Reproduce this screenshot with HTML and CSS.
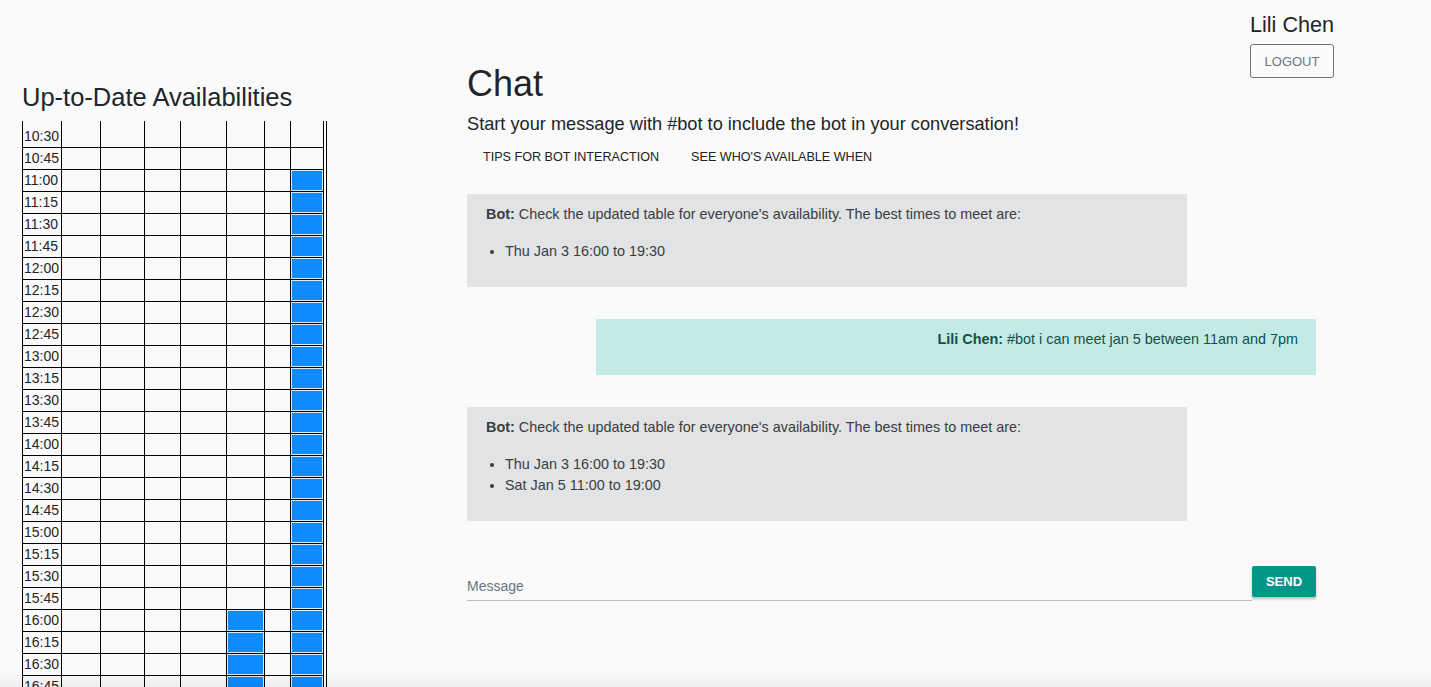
FILE: index.html
```html
<!DOCTYPE html>
<html lang="en">
<head>
<meta charset="utf-8">
<title>Chat</title>
<link rel="stylesheet" href="styles.css">
</head>
<body>
<div class="user-box">
  <div class="user-name">Lili Chen</div>
  <button class="btn-logout" type="button">LOGOUT</button>
</div>

<div class="page">
  <aside class="avail">
    <h2 class="avail-title">Up-to-Date Availabilities</h2>
    <div class="grid-wrap">
      <div class="grid">
        <div class="lbl first">10:30</div><div class="first"></div><div class="first"></div><div class="first"></div><div class="first"></div><div class="first"></div><div class="first"></div><div class="first"></div>
        <div class="lbl">10:45</div><div></div><div></div><div></div><div></div><div></div><div></div><div></div>
        <div class="lbl">11:00</div><div></div><div></div><div></div><div></div><div></div><div></div><div class="on"></div>
        <div class="lbl">11:15</div><div></div><div></div><div></div><div></div><div></div><div></div><div class="on"></div>
        <div class="lbl">11:30</div><div></div><div></div><div></div><div></div><div></div><div></div><div class="on"></div>
        <div class="lbl">11:45</div><div></div><div></div><div></div><div></div><div></div><div></div><div class="on"></div>
        <div class="lbl">12:00</div><div></div><div></div><div></div><div></div><div></div><div></div><div class="on"></div>
        <div class="lbl">12:15</div><div></div><div></div><div></div><div></div><div></div><div></div><div class="on"></div>
        <div class="lbl">12:30</div><div></div><div></div><div></div><div></div><div></div><div></div><div class="on"></div>
        <div class="lbl">12:45</div><div></div><div></div><div></div><div></div><div></div><div></div><div class="on"></div>
        <div class="lbl">13:00</div><div></div><div></div><div></div><div></div><div></div><div></div><div class="on"></div>
        <div class="lbl">13:15</div><div></div><div></div><div></div><div></div><div></div><div></div><div class="on"></div>
        <div class="lbl">13:30</div><div></div><div></div><div></div><div></div><div></div><div></div><div class="on"></div>
        <div class="lbl">13:45</div><div></div><div></div><div></div><div></div><div></div><div></div><div class="on"></div>
        <div class="lbl">14:00</div><div></div><div></div><div></div><div></div><div></div><div></div><div class="on"></div>
        <div class="lbl">14:15</div><div></div><div></div><div></div><div></div><div></div><div></div><div class="on"></div>
        <div class="lbl">14:30</div><div></div><div></div><div></div><div></div><div></div><div></div><div class="on"></div>
        <div class="lbl">14:45</div><div></div><div></div><div></div><div></div><div></div><div></div><div class="on"></div>
        <div class="lbl">15:00</div><div></div><div></div><div></div><div></div><div></div><div></div><div class="on"></div>
        <div class="lbl">15:15</div><div></div><div></div><div></div><div></div><div></div><div></div><div class="on"></div>
        <div class="lbl">15:30</div><div></div><div></div><div></div><div></div><div></div><div></div><div class="on"></div>
        <div class="lbl">15:45</div><div></div><div></div><div></div><div></div><div></div><div></div><div class="on"></div>
        <div class="lbl">16:00</div><div></div><div></div><div></div><div></div><div class="on"></div><div></div><div class="on"></div>
        <div class="lbl">16:15</div><div></div><div></div><div></div><div></div><div class="on"></div><div></div><div class="on"></div>
        <div class="lbl">16:30</div><div></div><div></div><div></div><div></div><div class="on"></div><div></div><div class="on"></div>
        <div class="lbl">16:45</div><div></div><div></div><div></div><div></div><div class="on"></div><div></div><div class="on"></div>
        <div class="lbl">17:00</div><div></div><div></div><div></div><div></div><div class="on"></div><div></div><div class="on"></div>
      </div>
    </div>
  </aside>

  <main class="chat">
    <h1 class="chat-title">Chat</h1>
    <p class="lead">Start your message with #bot to include the bot in your conversation!</p>
    <div class="tabs">
      <button class="tab" type="button">TIPS FOR BOT INTERACTION</button>
      <button class="tab" type="button">SEE WHO'S AVAILABLE WHEN</button>
    </div>

    <div class="messages">
      <div class="msg msg-bot">
        <p class="msg-text"><b>Bot:</b> Check the updated table for everyone's availability. The best times to meet are:</p>
        <ul class="msg-list">
          <li>Thu Jan 3 16:00 to 19:30</li>
        </ul>
      </div>
      <div class="msg msg-user">
        <p class="msg-text"><b>Lili Chen:</b> #bot i can meet jan 5 between 11am and 7pm</p>
      </div>
      <div class="msg msg-bot">
        <p class="msg-text"><b>Bot:</b> Check the updated table for everyone's availability. The best times to meet are:</p>
        <ul class="msg-list">
          <li>Thu Jan 3 16:00 to 19:30</li>
          <li>Sat Jan 5 11:00 to 19:00</li>
        </ul>
      </div>
    </div>

    <form class="composer">
      <input class="composer-input" type="text" placeholder="Message">
      <button class="btn-send" type="button">SEND</button>
    </form>
  </main>
</div>
<div class="bottom-shade"></div>
</body>
</html>
```

FILE: styles.css
```css
* { box-sizing: border-box; }

html, body {
  margin: 0;
  padding: 0;
  height: 100%;
  overflow: hidden;
}

body {
  background: #fafafa;
  font-family: "Liberation Sans", Arial, sans-serif;
  color: #212529;
}

/* user box top right */
.user-box {
  position: absolute;
  top: 12px;
  right: 97px;
  width: 84px;
  display: flex;
  flex-direction: column;
  align-items: flex-start;
}

.user-name {
  font-size: 21.6px;
  line-height: 26px;
  color: #212529;
  white-space: nowrap;
}

.btn-logout {
  margin-top: 6px;
  width: 84px;
  height: 34px;
  padding: 0;
  background: transparent;
  border: 1px solid #6c757d;
  border-radius: 3px;
  color: #6c757d;
  font-family: "Liberation Sans", Arial, sans-serif;
  font-size: 13px;
}

/* page layout */
.page {
  display: flex;
  padding-left: 22px;
}

.avail {
  width: 445px;
  flex: none;
  padding-top: 82px;
}

.avail-title {
  margin: 0 0 9px;
  font-size: 25.5px;
  line-height: 30px;
  font-weight: normal;
  color: #212529;
  white-space: nowrap;
}

.grid-wrap {
  width: 305px;
  height: 566px;
  overflow: hidden;
  border-right: 1px solid #000;
}

.grid {
  display: grid;
  grid-template-columns: 38px 38px 43px 35px 45px 37px 25px 32px;
  grid-template-rows: 26px;
  grid-auto-rows: 21px;
  gap: 1px;
  padding: 0 1px 1px;
  background: #000;
  width: 302px;
}

.grid > div {
  background: #fafafa;
}

.grid > .first {
  padding-top: 5px;
}

.grid > .lbl {
  font-size: 14px;
  line-height: 21px;
  padding-left: 1px;
  color: #212529;
  white-space: nowrap;
  overflow: hidden;
}

.grid > .on {
  background: #0d8bff;
  box-shadow: inset 0 0 0 1px #dce9f6;
}

/* chat */
.chat {
  width: 849px;
  flex: none;
  padding-top: 62px;
}

.chat-title {
  margin: 0 0 6px;
  font-size: 36px;
  line-height: 43px;
  font-weight: normal;
  color: #212529;
}

.lead {
  margin: 0;
  font-size: 18.2px;
  line-height: 27px;
  color: #212529;
}

.tabs {
  display: flex;
  margin-top: 1px;
}

.tab {
  height: 36px;
  padding: 0 16px;
  background: transparent;
  border: 0;
  font-family: "Liberation Sans", Arial, sans-serif;
  font-size: 12.6px;
  color: #212121;
}

.messages {
  margin-top: 19px;
  display: flex;
  flex-direction: column;
  gap: 32px;
}

.msg {
  width: 720px;
  padding: 12px 19px 11px;
  font-size: 14.4px;
}

.msg-bot {
  background: #e2e3e5;
  color: #383d41;
}

.msg-user {
  align-self: flex-end;
  background: #c4eae6;
  color: #11504a;
  text-align: right;
  padding-right: 18px;
}

.msg-text {
  margin: 0 0 18px;
  line-height: 17px;
}

.msg-user .msg-text {
  margin-bottom: 16px;
}

.msg-list {
  margin: 0 0 14px;
  padding-left: 19px;
  line-height: 21px;
}

/* composer */
.composer {
  display: flex;
  align-items: flex-start;
  margin-top: 45px;
}

.composer-input {
  width: 785px;
  height: 35px;
  padding: 6px 0 0;
  border: 0;
  border-bottom: 1px solid #bdbdbd;
  background: transparent;
  font-family: "Liberation Sans", Arial, sans-serif;
  font-size: 14px;
  outline: none;
}

.composer-input::placeholder {
  color: #6c757d;
}

.btn-send {
  width: 64px;
  height: 31px;
  padding: 0;
  border: 0;
  border-radius: 2px;
  background: #009688;
  color: #fff;
  font-family: "Liberation Sans", Arial, sans-serif;
  font-size: 13px;
  font-weight: bold;
  box-shadow: 0 2px 3px rgba(0, 0, 0, 0.25);
}

.bottom-shade {
  position: fixed;
  left: 0;
  right: 0;
  bottom: 0;
  height: 16px;
  background: linear-gradient(to bottom, rgba(0, 0, 0, 0), rgba(0, 0, 0, 0.05));
  pointer-events: none;
}
```
